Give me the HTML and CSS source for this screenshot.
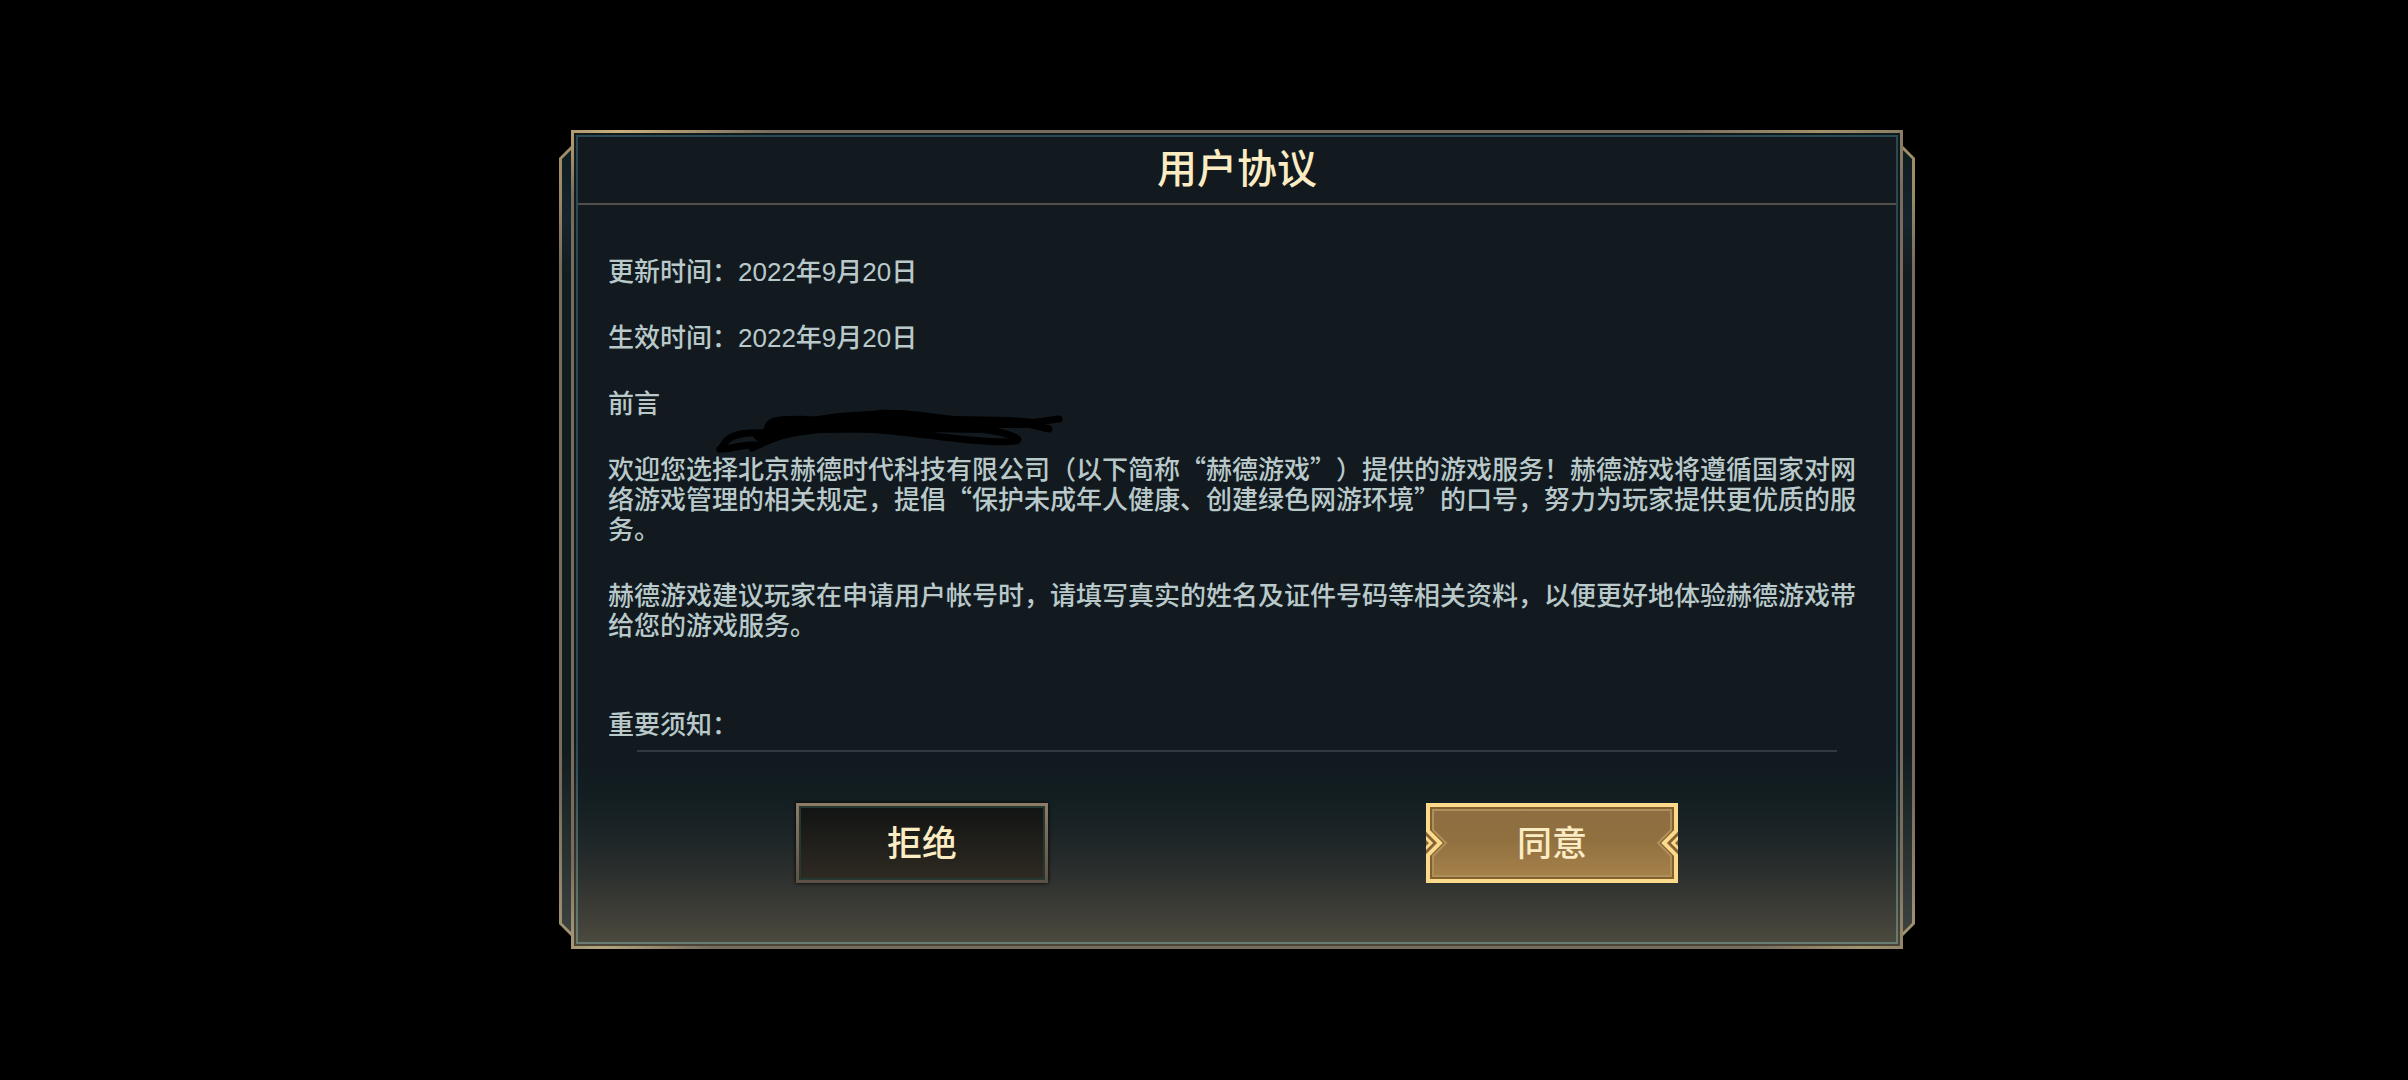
FILE: index.html
```html
<!DOCTYPE html>
<html lang="zh-CN">
<head>
  <meta charset="UTF-8" />
  <meta name="viewport" content="width=device-width, initial-scale=1.0" />
  <title>用户协议</title>
  <link rel="stylesheet" href="styles.css">
</head>
<body>
  <main class="dialog">
    <div class="dialog-edge">
      <div class="dialog-frame">
        <div class="dialog-inner">
          <header class="dialog-header">
            <h1>用户协议</h1>
          </header>

          <section class="agreement">
            <p class="date">更新时间：2022年9月20日</p>
            <p class="date">生效时间：2022年9月20日</p>
            <p>前言</p>
            <p>欢迎您选择北京赫德时代科技有限公司（以下简称“赫德游戏”）提供的游戏服务！赫德游戏将遵循国家对网络游戏管理的相关规定，提倡“保护未成年人健康、创建绿色网游环境”的口号，努力为玩家提供更优质的服务。</p>
            <p>赫德游戏建议玩家在申请用户帐号时，请填写真实的姓名及证件号码等相关资料，以便更好地体验赫德游戏带给您的游戏服务。</p>
            <p class="notice">重要须知：</p>

            <!-- Black pen stroke over the text -->
            <svg class="scribble" viewBox="0 0 500 170" aria-hidden="true">
              <g fill="none" stroke="#000" stroke-width="7" stroke-linecap="round" stroke-linejoin="round">
                <path d="M172 43 C150 42 138 47 134 54 C131 59 129 60 130 59 C145 59 151 54 164 55" />
                <path d="M162 58 C180 50 195 41 235 38 C285 38 310 42 352 47 C385 51 410 53 425 51 C434 50 422 43 390 39" />
                <path d="M350 35 L420 34 C440 34 452 31 469 29" />
                <path d="M400 31 L438 34 L459 39" />
              </g>
              <path d="M174 38 C176 27 187 26 203 26 C212 25 220 27 228 26 C255 21 275 22 290 20 C315 19 335 23 365 26 L420 27 L445 29 L445 38 L410 38 L388 43 L340 42 L230 43 C200 46 184 51 172 56 L163 47 Z" fill="#000" />
            </svg>
          </section>

          <hr class="divider">

          <footer class="dialog-footer">
            <button type="button" class="btn btn-reject">拒绝</button>
            <button type="button" class="btn btn-accept">
              <svg class="btn-frame" viewBox="0 0 252 80" preserveAspectRatio="none" aria-hidden="true">
                <defs>
                  <linearGradient id="gold" x1="0" y1="0" x2="0" y2="1">
                    <stop offset="0" stop-color="#8e6d43" />
                    <stop offset=".45" stop-color="#90703f" />
                    <stop offset="1" stop-color="#a8834c" />
                  </linearGradient>
                </defs>
                <rect width="252" height="80" fill="#866436" />
                <path d="M2 2H250V28L238 40L250 52V78H2V52L14 40L2 28Z" fill="url(#gold)" />
                <path d="M5 5H247V27L234 40L247 53V75H5V53L18 40L5 27Z" fill="none" stroke="#84602f" stroke-width="2" />
                <path d="M7 7H245V27L232 40L245 53V73H7V53L20 40L7 27Z" fill="none" stroke="#b0905a" stroke-width="2" />
                <path d="M2 2H250V28L238 40L250 52V78H2V52L14 40L2 28Z" fill="none" stroke="#fdd98b" stroke-width="4" />
                <path d="M-1 34L5 40L-1 46M253 34L247 40L253 46" fill="none" stroke="#fdd98b" stroke-width="3" />
              </svg>
              <span>同意</span>
            </button>
          </footer>
        </div>
      </div>
    </div>
  </main>
</body>
</html>
```

FILE: styles.css
```css
/* Basic Reset */
* { margin: 0; padding: 0; box-sizing: border-box; }
body {
  font-family: "Noto Sans CJK SC", "Liberation Sans", sans-serif;
  color: #b9c9ca;
  background: #000;
  display: flex;
  justify-content: center;
  align-items: flex-start;
  padding: 130px 0 100px 66px;
}

.dialog {
  position: relative;
  isolation: isolate;
  width: 100%;
  max-width: 1332px;
}
/* Side wings behind the panel */
.dialog::before,
.dialog::after {
  content: "";
  position: absolute;
}
.dialog::before {
  z-index: -2;
  inset: 16px -12px 13px;
  background: linear-gradient(#a08e68, #9b8a66 50px, #776b5a 120px, #776c5e 650px, #a39472);
  clip-path: polygon(12px 0, calc(100% - 12px) 0, 100% 12px, 100% calc(100% - 12px), calc(100% - 12px) 100%, 12px 100%, 0 calc(100% - 12px), 0 12px);
}
.dialog::after {
  z-index: -1;
  inset: 19px -9px 16px;
  background: linear-gradient(#0f1e20, #16242d 70px, #111c1e 130px, #111c1e 600px, #3c4240);
  clip-path: polygon(10px 0, calc(100% - 10px) 0, 100% 10px, 100% calc(100% - 10px), calc(100% - 10px) 100%, 10px 100%, 0 calc(100% - 10px), 0 10px);
}
/* Gold outer edge */
.dialog-edge {
  padding: 3px;
  background:
    radial-gradient(ellipse 150px 70px at 50px 0, #cbb07a, transparent),
    radial-gradient(ellipse 150px 70px at calc(100% - 80px) 0, #a19069, transparent),
    radial-gradient(ellipse 110px 90px at 30px 100%, #b5a57d, transparent),
    radial-gradient(ellipse 110px 90px at calc(100% - 40px) 100%, #a3946f, transparent),
    #776c5e;
}
.dialog-frame {
  padding: 2px;
  background: linear-gradient(#101a1b 75%, #4a4536);
}
.dialog-inner {
  border: 2px solid;
  border-image: linear-gradient(#294955 75%, #6a7d73) 2;
  background: linear-gradient(#121a20 0, #121a20 625px, #111d20 650px, #1b2427 695px, #2b2f2d 735px, #3f3f38 780px, #4b4a3e 100%);
}

.dialog-header {
  height: 68px;
  display: flex;
  align-items: center;
  justify-content: center;
  padding-bottom: 8px;
  border-bottom: 2px solid #514f4c;
}
.dialog-header h1 {
  font-size: 40px;
  line-height: 40px;
  font-weight: 500;
  color: #fbecc3;
}

/* Agreement text */
.agreement {
  position: relative;
  padding: 50px 31px 12px 30px;
  font-size: 26px;
  line-height: 30px;
  font-weight: 500;
  text-spacing-trim: space-all;
}
.agreement p {
  margin-bottom: 36px;
}
.agreement .date {
  height: 30px;
  line-height: 34px;
  font-family: "Liberation Sans", "Noto Sans CJK SC", sans-serif;
}
.agreement .notice {
  margin: 69px 0 0;
}
.scribble {
  position: absolute;
  left: 12px;
  top: 185px;
  width: 500px;
  height: 170px;
}
.divider {
  margin: 0 59px;
  border: 0;
  border-top: 2px solid #323a3f;
}

/* Buttons */
.dialog-footer {
  display: flex;
  justify-content: space-around;
  padding: 51px 29px 59px;
}
.btn {
  position: relative;
  width: 252px;
  height: 80px;
  border: 0;
  padding-bottom: 4px;
  font-family: inherit;
  font-size: 35px;
  line-height: 40px;
  font-weight: 500;
  color: #fbecc3;
  cursor: pointer;
}
.btn-reject {
  background:
    linear-gradient(#111413, #2f2a22) padding-box,
    linear-gradient(#8d7c67, #5c5046) border-box;
  border: 3px solid transparent;
  box-shadow: inset 0 0 0 2px #24382f, 0 0 4px #000;
}
.btn-accept {
  background: none;
}
.btn-frame {
  position: absolute;
  inset: 0;
  width: 100%;
  height: 100%;
}
.btn-accept span {
  position: relative;
}
```
